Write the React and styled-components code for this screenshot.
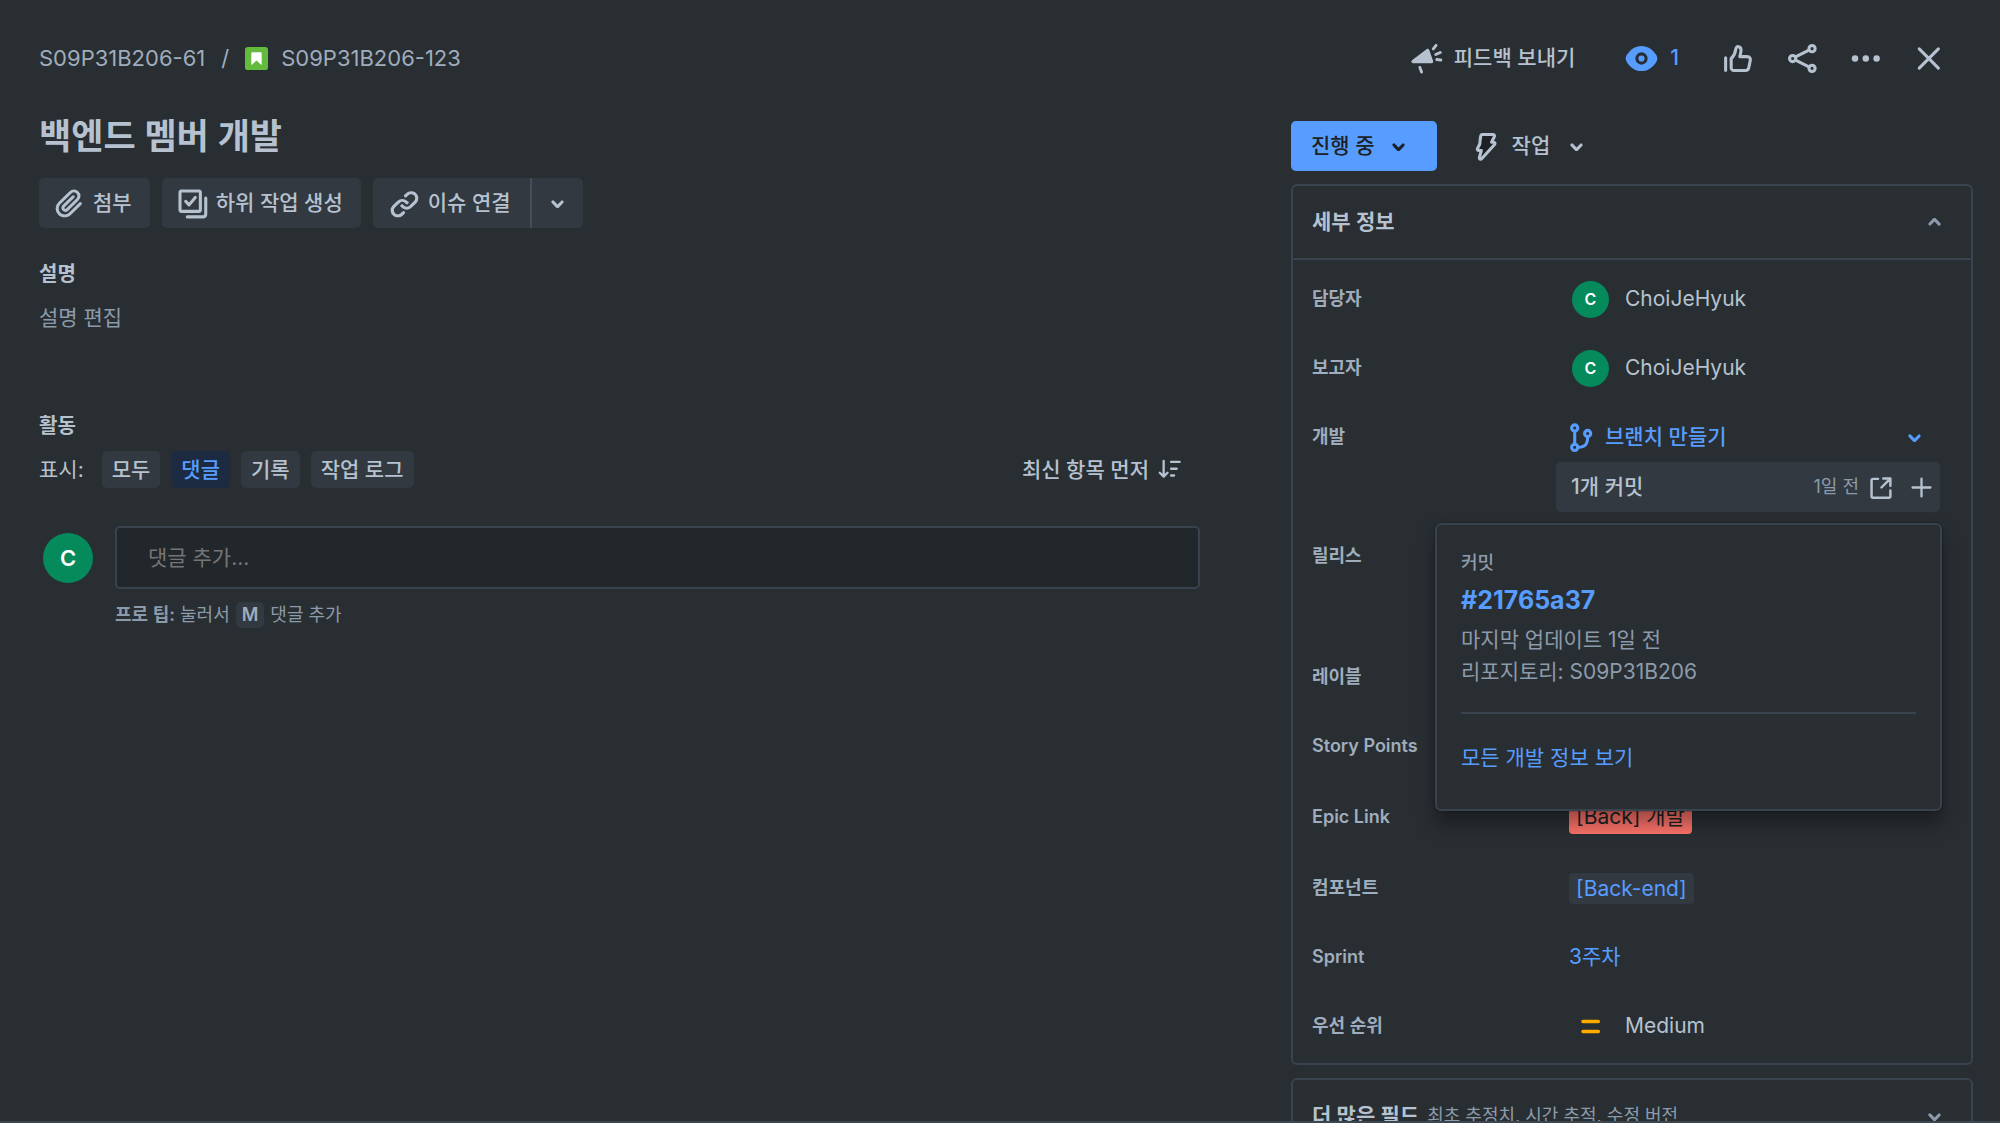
import React, { useState } from "react";
import styled, { createGlobalStyle } from "styled-components";

const GlobalStyle = createGlobalStyle`
  * {
    box-sizing: border-box;
  }

  body {
    margin: 0;
    background-color: #292e32;
    color: #b6c2cf;
    font-family: Inter, "Noto Sans CJK KR", sans-serif;
    font-size: 21px;
    line-height: 32px;
  }

  button, input {
    font: inherit;
    color: inherit;
  }

  a {
    color: #579dff;
    text-decoration: none;
  }
`;

const Page = styled.div`
  height: 100vh;
  overflow: hidden;
  padding: 33px 27px 0 39px;
  border-bottom: 2px solid #3c464f;
`;

const Header = styled.header`
  display: flex;
  align-items: center;
  justify-content: space-between;
  margin-bottom: 31px;
  padding-right: 20px;
`;

const Breadcrumbs = styled.nav`
  display: flex;
  align-items: center;
  font-size: 22px;

  a {
    color: #9fadbc;
  }
`;

const Slash = styled.span`
  margin: 0 16px;
  color: #9fadbc;
`;

const StoryIcon = styled.svg`
  width: 23px;
  height: 23px;
  margin-right: 13px;
`;

const HeaderActions = styled.div`
  display: flex;
  align-items: center;
  gap: 13px;
`;

const Button = styled.button`
  display: inline-flex;
  align-items: center;
  justify-content: center;
  gap: ${({ $gap }) => $gap || '5px'};
  height: 50px;
  min-width: 50px;
  padding: ${({ $padding }) => $padding || '0'};
  border: 0;
  border-radius: 5px;
  background-color: ${({ $filled }) => ($filled ? '#323940' : 'transparent')};
  color: ${({ $active }) => ($active ? '#579dff' : '#b6c2cf')};
  font-weight: 500;
  cursor: pointer;
`;

const FeedbackButton = styled(Button)`
  margin-right: 14px;
`;

const Icon = styled.svg`
  flex: none;
  display: block;
  width: 37px;
  height: 37px;
`;

const Columns = styled.div`
  display: grid;
  grid-template-columns: minmax(0, 1161fr) minmax(0, 682fr);
  gap: 91px;
`;

const Title = styled.h1`
  margin: 0 0 19px;
  font-size: 35px;
  line-height: 45px;
  font-weight: 600;
`;

const Toolbar = styled.div`
  display: flex;
  gap: 12px;
`;

const SplitButton = styled.div`
  display: flex;

  button:first-child {
    border-radius: 5px 0 0 5px;
  }

  button:last-child {
    min-width: 53px;
    border-left: 2px solid #454f59;
    border-radius: 0 5px 5px 0;
  }
`;

const SectionTitle = styled.h2`
  margin: 0;
  font-size: 20px;
  line-height: 32px;
  font-weight: 600;
`;

const Section = styled.section`
  margin-top: ${({ $top }) => $top};
`;

const Description = styled.p`
  margin: 12px 0 0;
  color: #8c9bab;
`;

const FilterRow = styled.div`
  display: flex;
  align-items: center;
  gap: 11px;
  margin-top: 9px;
`;

const FilterLabel = styled.span`
  margin-right: 7px;
`;

const FilterButton = styled.button`
  height: 37px;
  padding: 0 10px;
  border: 0;
  border-radius: 5px;
  background-color: ${({ $active }) => ($active ? '#1c2b41' : '#323940')};
  color: ${({ $active }) => ($active ? '#579dff' : '#b6c2cf')};
  font-weight: 500;
  line-height: 36px;
  cursor: pointer;
`;

const SortButton = styled(Button)`
  height: 37px;
  margin-left: auto;
  padding-right: 12px;
`;

const CommentRow = styled.div`
  display: grid;
  grid-template-columns: 50px 1fr;
  column-gap: 22px;
  align-items: center;
  margin-top: 38px;
  padding-left: 4px;
`;

const Avatar = styled.span`
  flex: none;
  display: flex;
  align-items: center;
  justify-content: center;
  width: ${({ $size }) => $size}px;
  height: ${({ $size }) => $size}px;
  border-radius: 50%;
  background-color: #048a5b;
  color: #ffffff;
  font-size: ${({ $size }) => ($size > 40 ? '22px' : '16px')};
  font-weight: 600;
`;

const CommentInput = styled.input`
  width: 100%;
  height: 63px;
  padding: 0 31px;
  border: 2px solid #38434d;
  border-radius: 5px;
  background-color: #22272b;
  outline: none;

  &::placeholder {
    color: #757575;
    opacity: 1;
  }
`;

const ProTip = styled.p`
  grid-column: 2;
  display: flex;
  align-items: center;
  gap: 6px;
  margin: 13px 0 0;
  font-size: 18px;
  line-height: 26px;
  color: #8c9bab;

  b {
    font-weight: 600;
  }
`;

const Key = styled.kbd`
  padding: 0 6px;
  border-radius: 5px;
  background-color: #323940;
  color: #9fadbc;
  font-family: inherit;
  font-weight: 600;
`;

const Side = styled.aside`
  padding-top: 7px;
`;

const StatusRow = styled.div`
  display: flex;
  align-items: center;
  gap: 30px;
  margin-bottom: 13px;
`;

const StatusButton = styled(Button)`
  background-color: #579dff;
  color: #1d2125;
`;

const Panel = styled.section`
  margin-bottom: 13px;
  border: 2px solid #38434d;
  border-radius: 6px;
`;

const PanelHeader = styled.button`
  display: flex;
  align-items: center;
  gap: 8px;
  width: 100%;
  height: 72px;
  padding: 0 18px 0 19px;
  border: 0;
  background-color: transparent;
  text-align: left;
  cursor: pointer;

  svg {
    margin-left: auto;
    color: #8c9bab;
  }
`;

const PanelTitle = styled.span`
  font-weight: 600;
`;

const PanelHint = styled.span`
  font-size: 18px;
  color: #8c9bab;
`;

const Fields = styled.dl`
  display: flex;
  flex-direction: column;
  gap: 19px;
  margin: 0;
  padding: 14px 31px 12px 19px;
  border-top: 2px solid #38434d;
`;

const Field = styled.div`
  display: grid;
  grid-template-columns: 244px minmax(0, 1fr);
  align-items: ${({ $tall }) => ($tall ? 'start' : 'center')};
  min-height: ${({ $height }) => $height || '50px'};
`;

const FieldLabel = styled.dt`
  font-size: 18px;
  line-height: 50px;
  font-weight: 600;
  color: #9fadbc;
`;

const FieldValue = styled.dd`
  display: flex;
  align-items: center;
  gap: 16px;
  margin: 0;
  padding-left: ${({ $left }) => $left || '13px'};
`;

const Development = styled.dd`
  position: relative;
  margin: 0;
`;

const BranchLink = styled.button`
  display: flex;
  align-items: center;
  gap: 5px;
  width: 100%;
  height: 50px;
  padding: 0 7px;
  border: 0;
  background-color: transparent;
  color: #579dff;
  font-weight: 500;
  cursor: pointer;

  svg:last-child {
    margin-left: auto;
  }
`;

const CommitRow = styled.div`
  display: flex;
  align-items: center;
  height: 50px;
  padding: 0 0 0 15px;
  border-radius: 5px;
  background-color: #323940;
  font-weight: 500;
`;

const CommitTime = styled.time`
  margin-left: auto;
  margin-right: 3px;
  font-size: 18px;
  font-weight: 400;
  color: #8c9bab;
`;

const IconButton = styled.button`
  padding: 0;
  border: 0;
  background-color: transparent;
  cursor: pointer;

  & + & {
    margin-left: 4px;
  }
`;

const Popup = styled.div`
  position: absolute;
  z-index: 10;
  top: 111px;
  right: -2px;
  width: 507px;
  padding: 24px 24px 35px;
  border: 2px solid #38434d;
  border-radius: 6px;
  background-color: #292e32;
  box-shadow: 0 12px 18px rgba(3, 4, 4, 0.36), 0 0 2px rgba(3, 4, 4, 0.5);
  color: #8c9bab;
`;

const PopupType = styled.div`
  font-size: 18px;
  line-height: 28px;
  font-weight: 500;
`;

const PopupHash = styled.a`
  display: block;
  margin: 7px 0 8px;
  font-size: 25px;
  font-weight: 700;
`;

const PopupDivider = styled.hr`
  margin: 24px 0 28px;
  border: 0;
  border-top: 2px solid #38434d;
`;

const Lozenge = styled.a`
  padding: 0 7px;
  border-radius: 4px;
  line-height: ${({ $epic }) => ($epic ? '34px' : '31px')};
  background-color: ${({ $epic }) => ($epic ? '#f87168' : '#323940')};
  color: ${({ $epic }) => ($epic ? '#1d2125' : '#579dff')};
`;

const ChevronIcon = ({ up }) => (
  <Icon viewBox="0 0 24 24" fill="currentColor">
    <path
      transform={up ? 'rotate(180 12 12)' : undefined}
      d="M8.292 10.293a1.009 1.009 0 000 1.419l2.939 2.965c.218.215.5.322.779.322s.556-.107.769-.322l2.93-2.955a1.01 1.01 0 000-1.419.987.987 0 00-1.406 0l-2.298 2.317-2.307-2.327a.99.99 0 00-1.406 0z"
    />
  </Icon>
);

const LineIcon = ({ children, width = 2 }) => (
  <Icon
    viewBox="0 0 24 24"
    fill="none"
    stroke="currentColor"
    strokeWidth={width}
    strokeLinecap="round"
    strokeLinejoin="round"
  >
    {children}
  </Icon>
);

const FeedbackIcon = () => (
  <LineIcon width={1.9}>
    <path d="M2.6 13.2 12 6c.7-.5 1.500-.3 1.800.5l2.500 7.200c.2.800-.2 1.400-1 1.400H3.200c-1 0-1.400-1.200-.6-1.900z" fill="currentColor" stroke="none" />
    <path d="m7.700 17.800 1.100 3M16.400 5.800l1.800-2.300M18 9.400l2.900-1.300M18.700 12.700l2.600.3" />
  </LineIcon>
);

const WatchIcon = () => (
  <Icon viewBox="0 0 24 24">
    <path
      d="M12 3.9c4.2 0 7.3 2.4 9.6 5.9.9 1.4.9 3 0 4.4-2.3 3.5-5.4 5.9-9.6 5.9s-7.3-2.4-9.6-5.9c-.9-1.4-.9-3 0-4.4C4.700 6.300 7.800 3.900 12 3.900z"
      fill="currentColor"
    />
    <circle cx="12" cy="12" r="3" fill="currentColor" stroke="#292e32" strokeWidth="2" />
  </Icon>
);

const LikeIcon = () => (
  <LineIcon width={2}>
    <path d="M3 11.500v8.200" />
    <path d="M6.600 12c1.700-1.500 2.600-3.400 2.900-5.700.2-1.500 1-2.200 2-1.900 1.300.3 1.700 1.700 1.400 3.200l-.7 3.200h4.800c1.500 0 2.300 1 2 2.400l-1 4.800c-.2 1.200-1 1.800-2.200 1.800H8.400c-1.100 0-1.800-.7-1.800-1.800z" />
  </LineIcon>
);

const ShareIcon = () => (
  <LineIcon width={2}>
    <circle cx="5.600" cy="12" r="2" />
    <circle cx="18.200" cy="5.600" r="2" />
    <circle cx="18.200" cy="18.400" r="2" />
    <path d="m7.500 11 8.700-4.400M7.500 13l8.700 4.400" />
  </LineIcon>
);

const MoreIcon = () => (
  <Icon viewBox="0 0 24 24" fill="currentColor">
    <circle cx="5.200" cy="12" r="2.100" />
    <circle cx="12.200" cy="12" r="2.100" />
    <circle cx="19.200" cy="12" r="2.100" />
  </Icon>
);

const CloseIcon = () => (
  <LineIcon>
    <path d="m6 5.800 12.400 12.400M18.400 5.800 6 18.200" />
  </LineIcon>
);

const AttachIcon = () => (
  <Icon viewBox="0 0 24 24" fill="currentColor">
    <path d="M11.643 17.965c-1.53 1.495-4.016 1.496-5.542.004a3.773 3.773 0 01.002-5.412l7.147-6.985a2.316 2.316 0 013.233-.003c.893.873.895 2.282.004 3.153l-6.703 6.55a.653.653 0 01-.914-.008.62.62 0 010-.902l6.229-6.087a.941.941 0 000-1.353.995.995 0 00-1.384 0l-6.23 6.087a2.502 2.502 0 000 3.607 2.643 2.643 0 003.683.009l6.703-6.55a4.074 4.074 0 00-.003-5.859 4.306 4.306 0 00-6.002.003l-7.148 6.985a5.655 5.655 0 00-.001 8.118c2.29 2.237 6.015 2.238 8.31-.005l6.686-6.533a.941.941 0 000-1.353.995.995 0 00-1.384 0l-6.686 6.534z" />
  </Icon>
);

const SubtaskIcon = () => (
  <LineIcon>
    <rect x="3.900" y="3.900" width="13.200" height="13.200" rx="1" />
    <path d="m7.600 10.600 2.200 2.300 4-4.800" />
    <path d="M20.600 8.400v10.400c0 1.100-.8 1.900-1.900 1.900H8.600" />
  </LineIcon>
);

const LinkIcon = () => (
  <Icon viewBox="0 0 24 24" fill="currentColor">
    <path d="M12.856 5.457l-.937.92a1.002 1.002 0 000 1.437 1.047 1.047 0 001.463 0l.984-.966c.967-.95 2.542-1.135 3.602-.288a2.54 2.54 0 01.203 3.81l-2.903 2.852a2.646 2.646 0 01-3.696 0l-1.11-1.09L9 13.57l1.108 1.089c1.822 1.788 4.802 1.788 6.622 0l2.905-2.852a4.558 4.558 0 00-.357-6.82c-1.893-1.517-4.695-1.226-6.422.47" />
    <path d="M11.144 19.543l.937-.92a1.002 1.002 0 000-1.437 1.047 1.047 0 00-1.462 0l-.985.966c-.967.95-2.542 1.135-3.602.288a2.54 2.54 0 01-.203-3.81l2.903-2.852a2.646 2.646 0 013.696 0l1.11 1.09L15 11.43l-1.108-1.089c-1.822-1.788-4.802-1.788-6.622 0l-2.905 2.852a4.558 4.558 0 00.357 6.82c1.893 1.517 4.695 1.226 6.422-.47" />
  </Icon>
);

const BoltIcon = () => (
  <LineIcon width={2}>
    <path d="M9.600 4.200h7.200c.9 0 1.300.7.900 1.500l-1.800 3.500h1.300c.9 0 1.200.8.700 1.500l-8.400 9.200c-.6.7-1.700.2-1.500-.7l1.300-4.600H7.700c-.8 0-1.200-.6-.9-1.300l1.500-2.900c.1-.5 0-1.200.1-1.600l.5-3.600c.1-.6.300-1 .7-1z" fill="#1d2125" />
  </LineIcon>
);

const SortIcon = () => (
  <LineIcon width={1.5}>
    <path d="M8.200 6.400v10M5.700 14.100l2.500 2.500 2.500-2.500M13 7.100h5.600M13 11.500h3.700M13 15.900h2" />
  </LineIcon>
);

const BranchIcon = () => (
  <LineIcon width={2}>
    <circle cx="7.600" cy="5.800" r="2" />
    <circle cx="7.600" cy="18.400" r="2" />
    <circle cx="16" cy="9.400" r="2" />
    <path d="M7.600 7.800v8.600M16 11.400c0 5-1.400 6.800-6.400 7" />
  </LineIcon>
);

const OpenIcon = () => (
  <LineIcon width={1.6}>
    <path d="M10.400 6.400H7.200c-.6 0-1 .4-1 1v10.200c0 .6.4 1 1 1h10.200c.6 0 1-.4 1-1V14M13.800 6.200h4.600v4.600M18.200 6.400l-5.600 5.600" />
  </LineIcon>
);

const PlusIcon = () => (
  <LineIcon width={1.5}>
    <path d="M12 6.200v11.600M6.200 12h11.600" />
  </LineIcon>
);

const MediumIcon = () => (
  <LineIcon width={2.2}>
    <path d="M7.100 8.800h10M7.100 15.200h10" stroke="#ffab00" />
  </LineIcon>
);

const filters = ['모두', '댓글', '기록', '작업 로그'];

const App = () => {
  const [filter, setFilter] = useState('댓글');
  const [detailsOpen, setDetailsOpen] = useState(true);
  const [comment, setComment] = useState('');

  return (
    <Page>
      <GlobalStyle />
      <Header>
        <Breadcrumbs>
          <a href="#parent">S09P31B206-61</a>
          <Slash>/</Slash>
          <StoryIcon viewBox="0 0 16 16">
            <rect width="16" height="16" rx="2" fill="#63ba3c" />
            <path d="M5 3.700h6a.6.6 0 01.6.6v8.400L8 9.400l-3.600 3.300V4.300a.6.6 0 01.6-.6z" fill="#fff" />
          </StoryIcon>
          <a href="#issue">S09P31B206-123</a>
        </Breadcrumbs>
        <HeaderActions>
          <FeedbackButton $padding="0 12px 0 9px" $gap="9px"><FeedbackIcon />피드백 보내기</FeedbackButton>
          <Button $active $padding="0 22px 0 9px" $gap="10px"><WatchIcon />1</Button>
          <Button aria-label="투표"><LikeIcon /></Button>
          <Button aria-label="공유"><ShareIcon /></Button>
          <Button aria-label="더 보기"><MoreIcon /></Button>
          <Button aria-label="닫기"><CloseIcon /></Button>
        </HeaderActions>
      </Header>

      <Columns>
        <main>
          <Title>백엔드 멤버 개발</Title>
          <Toolbar>
            <Button $filled $padding="0 18px 0 12px"><AttachIcon />첨부</Button>
            <Button $filled $padding="0 18px 0 12px"><SubtaskIcon />하위 작업 생성</Button>
            <SplitButton>
              <Button $filled $padding="0 19px 0 13px"><LinkIcon />이슈 연결</Button>
              <Button $filled aria-label="이슈 연결 옵션"><ChevronIcon /></Button>
            </SplitButton>
          </Toolbar>

          <Section $top="30px">
            <SectionTitle>설명</SectionTitle>
            <Description>설명 편집</Description>
          </Section>

          <Section $top="76px">
            <SectionTitle>활동</SectionTitle>
            <FilterRow>
              <FilterLabel>표시:</FilterLabel>
              {filters.map((name) => (
                <FilterButton key={name} $active={filter === name} onClick={() => setFilter(name)}>
                  {name}
                </FilterButton>
              ))}
              <SortButton $gap="2px">최신 항목 먼저<SortIcon /></SortButton>
            </FilterRow>
            <CommentRow>
              <Avatar $size={50}>C</Avatar>
              <CommentInput
                aria-label="댓글 추가"
                placeholder="댓글 추가..."
                value={comment}
                onChange={(e) => setComment(e.target.value)}
              />
              <ProTip><span><b>프로 팁:</b> 눌러서</span><Key>M</Key>댓글 추가</ProTip>
            </CommentRow>
          </Section>
        </main>

        <Side>
          <StatusRow>
            <StatusButton $padding="0 20px" $gap="5px">진행 중<ChevronIcon /></StatusButton>
            <Button $gap="8px"><BoltIcon />작업<ChevronIcon /></Button>
          </StatusRow>

          <Panel>
            <PanelHeader aria-expanded={detailsOpen} onClick={() => setDetailsOpen(!detailsOpen)}>
              <PanelTitle>세부 정보</PanelTitle>
              <ChevronIcon up={detailsOpen} />
            </PanelHeader>
            {detailsOpen && (
              <Fields>
                <Field>
                  <FieldLabel>담당자</FieldLabel>
                  <FieldValue $left="16px"><Avatar $size={37}>C</Avatar>ChoiJeHyuk</FieldValue>
                </Field>
                <Field>
                  <FieldLabel>보고자</FieldLabel>
                  <FieldValue $left="16px"><Avatar $size={37}>C</Avatar>ChoiJeHyuk</FieldValue>
                </Field>
                <Field $tall>
                  <FieldLabel>개발</FieldLabel>
                  <Development>
                    <BranchLink><BranchIcon />브랜치 만들기<ChevronIcon /></BranchLink>
                    <CommitRow>
                      1개 커밋
                      <CommitTime>1일 전</CommitTime>
                      <IconButton aria-label="커밋 열기"><OpenIcon /></IconButton>
                      <IconButton aria-label="커밋 만들기"><PlusIcon /></IconButton>
                    </CommitRow>
                    <Popup>
                      <PopupType>커밋</PopupType>
                      <PopupHash href="#commit">#21765a37</PopupHash>
                      <div>마지막 업데이트 1일 전</div>
                      <div>리포지토리: S09P31B206</div>
                      <PopupDivider />
                      <a href="#development">모든 개발 정보 보기</a>
                    </Popup>
                  </Development>
                </Field>
                <Field $tall $height="102px">
                  <FieldLabel>릴리스</FieldLabel>
                </Field>
                <Field>
                  <FieldLabel>레이블</FieldLabel>
                </Field>
                <Field>
                  <FieldLabel>Story Points</FieldLabel>
                </Field>
                <Field $height="54px">
                  <FieldLabel>Epic Link</FieldLabel>
                  <FieldValue><Lozenge $epic href="#epic">[Back] 개발</Lozenge></FieldValue>
                </Field>
                <Field>
                  <FieldLabel>컴포넌트</FieldLabel>
                  <FieldValue><Lozenge href="#component">[Back-end]</Lozenge></FieldValue>
                </Field>
                <Field>
                  <FieldLabel>Sprint</FieldLabel>
                  <FieldValue><a href="#sprint">3주차</a></FieldValue>
                </Field>
                <Field>
                  <FieldLabel>우선 순위</FieldLabel>
                  <FieldValue $left="16px"><MediumIcon />Medium</FieldValue>
                </Field>
              </Fields>
            )}
          </Panel>

          <Panel>
            <PanelHeader aria-expanded={false}>
              <PanelTitle>더 많은 필드</PanelTitle>
              <PanelHint>최초 추정치, 시간 추적, 수정 버전</PanelHint>
              <ChevronIcon />
            </PanelHeader>
          </Panel>
        </Side>
      </Columns>
    </Page>
  );
};

export default App;
